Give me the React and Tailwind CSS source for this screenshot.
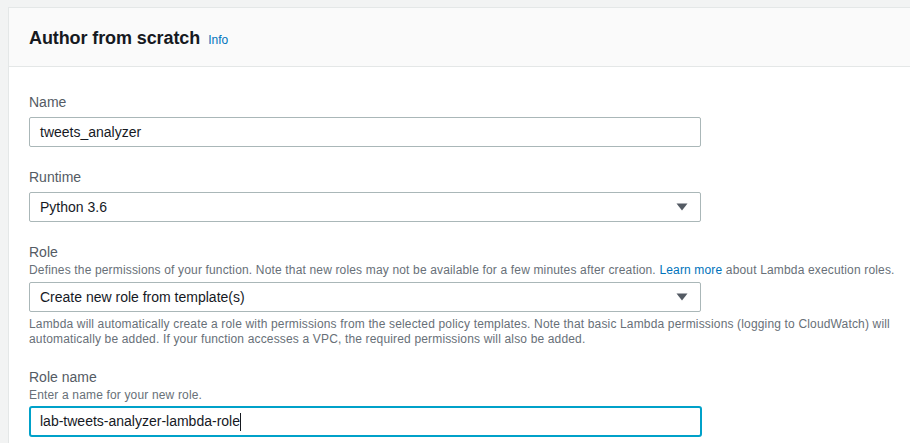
import React from 'react';

const font = { fontFamily: '"Liberation Sans", Arial, sans-serif' };

const Caret = () => (
  <svg width="12" height="8" viewBox="0 0 12 8" className="shrink-0">
    <path d="M0.5 0.5 H11.5 L6 7.5 Z" fill="#545b64" />
  </svg>
);

const Label = ({ children }) => (
  <div className="text-[14px] leading-[20px] text-[#545b64]">{children}</div>
);

const Hint = ({ children }) => (
  <div className="text-[12px] leading-[16px] tracking-[0.16px] text-[#687078]">{children}</div>
);

const Select = ({ value }) => (
  <div className="w-[672px] h-[30px] border border-[#aab7b8] rounded-[2px] bg-white flex items-center justify-between pl-[10px] pr-[12px]">
    <span className="text-[14px] text-[#16191f]">{value}</span>
    <Caret />
  </div>
);

export default function App() {
  return (
    <div style={font} className="w-[910px] h-[443px] overflow-hidden bg-[#f2f3f3] pt-[7px] pl-[8px]">
      <div className="bg-white border-l border-t border-[#e4e7e7] h-full">
        <div className="h-[59px] bg-[#fafafa] border-b border-[#e4e7e7] flex items-center pl-[20px] pt-[3px]">
          <h2 className="text-[18px] font-bold text-[#16191f] tracking-[-0.1px]">Author from scratch</h2>
          <a className="ml-[8px] text-[12px] text-[#0073bb] mt-[2px]">Info</a>
        </div>

        <div className="pl-[20px] pt-[25px]">
          <Label>Name</Label>
          <div className="mt-[5px] w-[672px] h-[30px] border border-[#aab7b8] rounded-[2px] flex items-center pl-[10px]">
            <span className="text-[14px] text-[#16191f]">tweets_analyzer</span>
          </div>

          <div className="mt-[20px]">
            <Label>Runtime</Label>
            <div className="mt-[5px]">
              <Select value="Python 3.6" />
            </div>
          </div>

          <div className="mt-[20px]">
            <Label>Role</Label>
            <Hint>
              Defines the permissions of your function. Note that new roles may not be available for a few minutes after creation.{' '}
              <a className="text-[#0073bb]">Learn more</a> about Lambda execution roles.
            </Hint>
            <div className="mt-[4px]">
              <Select value="Create new role from template(s)" />
            </div>
            <div className="mt-[5px] text-[12px] leading-[15px] tracking-[0.16px] text-[#687078] w-[878px]">
              Lambda will automatically create a role with permissions from the selected policy templates. Note that basic Lambda permissions (logging to CloudWatch) will automatically be added. If your function accesses a VPC, the required permissions will also be added.
            </div>
          </div>

          <div className="mt-[20px]">
            <Label>Role name</Label>
            <Hint>Enter a name for your new role.</Hint>
            <div className="mt-[3px] w-[673px] h-[31px] border-2 border-[#00a1c9] rounded-[3px] flex items-center pl-[9px]">
              <span className="text-[14px] text-[#16191f]">lab-tweets-analyzer-lambda-role</span>
              <span className="w-px h-[18px] bg-[#16191f]" />
            </div>
          </div>
        </div>
      </div>
    </div>
  );
}
